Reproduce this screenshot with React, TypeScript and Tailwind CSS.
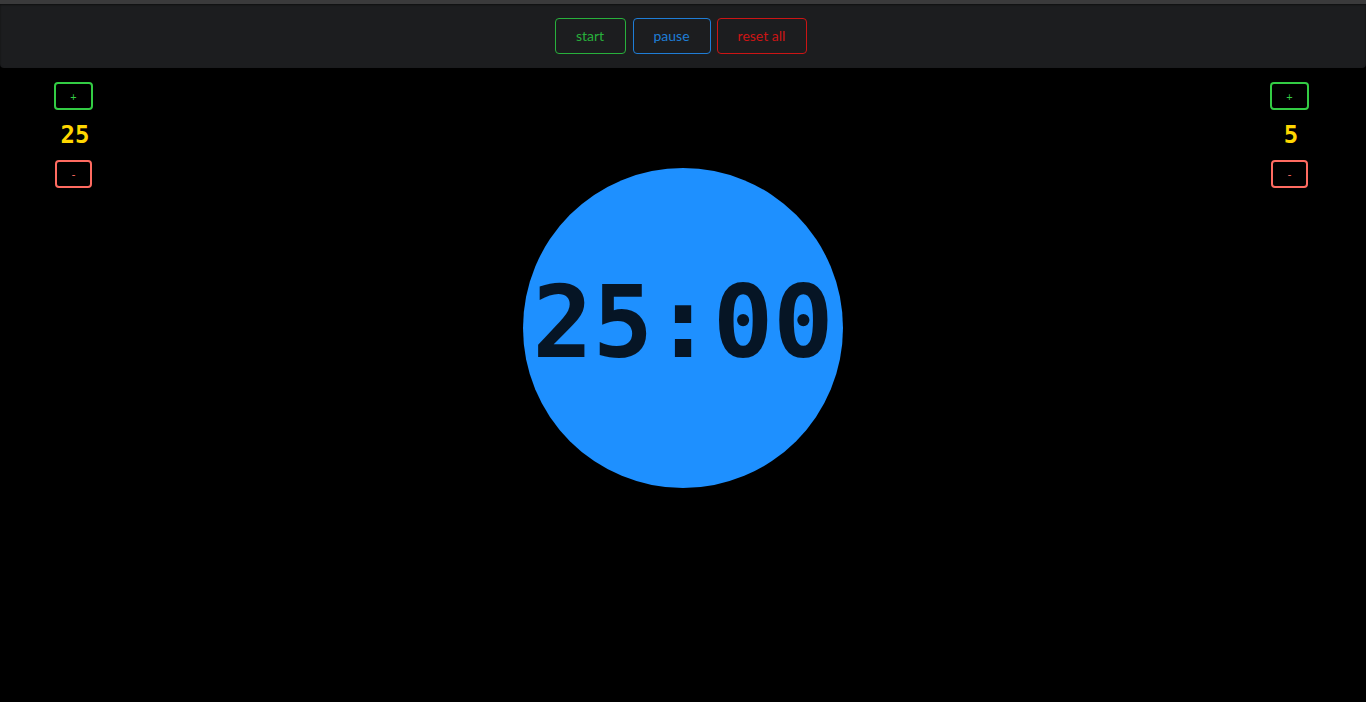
import React from "react";

function SideControl({ value, className }: { value: string; className: string }) {
  return (
    <div className={"flex flex-col items-center " + className}>
      <button className="h-[28px] w-[39px] rounded-[4px] border-2 border-[#33cc44] text-[#33cc44] text-[11px] leading-none font-['Lato',sans-serif]">
        +
      </button>
      <div className="h-[50px] pl-[3px] flex items-center justify-center text-[24px] font-bold text-[#ffd700] font-['DejaVu_Sans_Mono',monospace]">
        {value}
      </div>
      <button className="h-[28px] w-[37px] rounded-[4px] border-2 border-[#ff6b61] text-[#ff6b61] text-[11px] leading-none font-['Lato',sans-serif]">
        -
      </button>
    </div>
  );
}

export default function App() {
  return (
    <div className="w-[1366px] h-[702px] bg-black overflow-hidden flex flex-col">
      <div className="h-[4px] bg-[#3a3a3b] shrink-0" />
      <div className="h-[64px] shrink-0 bg-[#1c1d1f] rounded-b-[4px] shadow-[inset_0_1px_2px_rgba(0,0,0,0.5)] flex items-center justify-center pr-[5px] font-['Lato',sans-serif] text-[14px]">
        <button className="h-[36px] w-[71px] rounded-[4px] border border-[#28b03c] text-[#28b03c] pb-[2px]">start</button>
        <button className="ml-[7px] h-[36px] w-[78px] rounded-[4px] border border-[#1f7dd6] text-[#1f7dd6] pb-[2px]">pause</button>
        <button className="ml-[6px] h-[36px] w-[90px] rounded-[4px] border border-[#cc1515] text-[#cc1515] pb-[2px]">reset all</button>
      </div>
      <div className="grid grid-cols-[1fr_auto_1fr] items-start">
        <SideControl value="25" className="justify-self-start ml-[54px] mt-[14px]" />
        <div className="mt-[100px] w-[320px] h-[320px] rounded-full bg-[#1e90ff] flex items-center justify-center pb-[10px]">
          <span className="text-[#061525] font-bold text-[100px] leading-none font-['DejaVu_Sans_Mono',monospace]">25:00</span>
        </div>
        <SideControl value="5" className="justify-self-end mr-[57px] mt-[14px]" />
      </div>
    </div>
  );
}
